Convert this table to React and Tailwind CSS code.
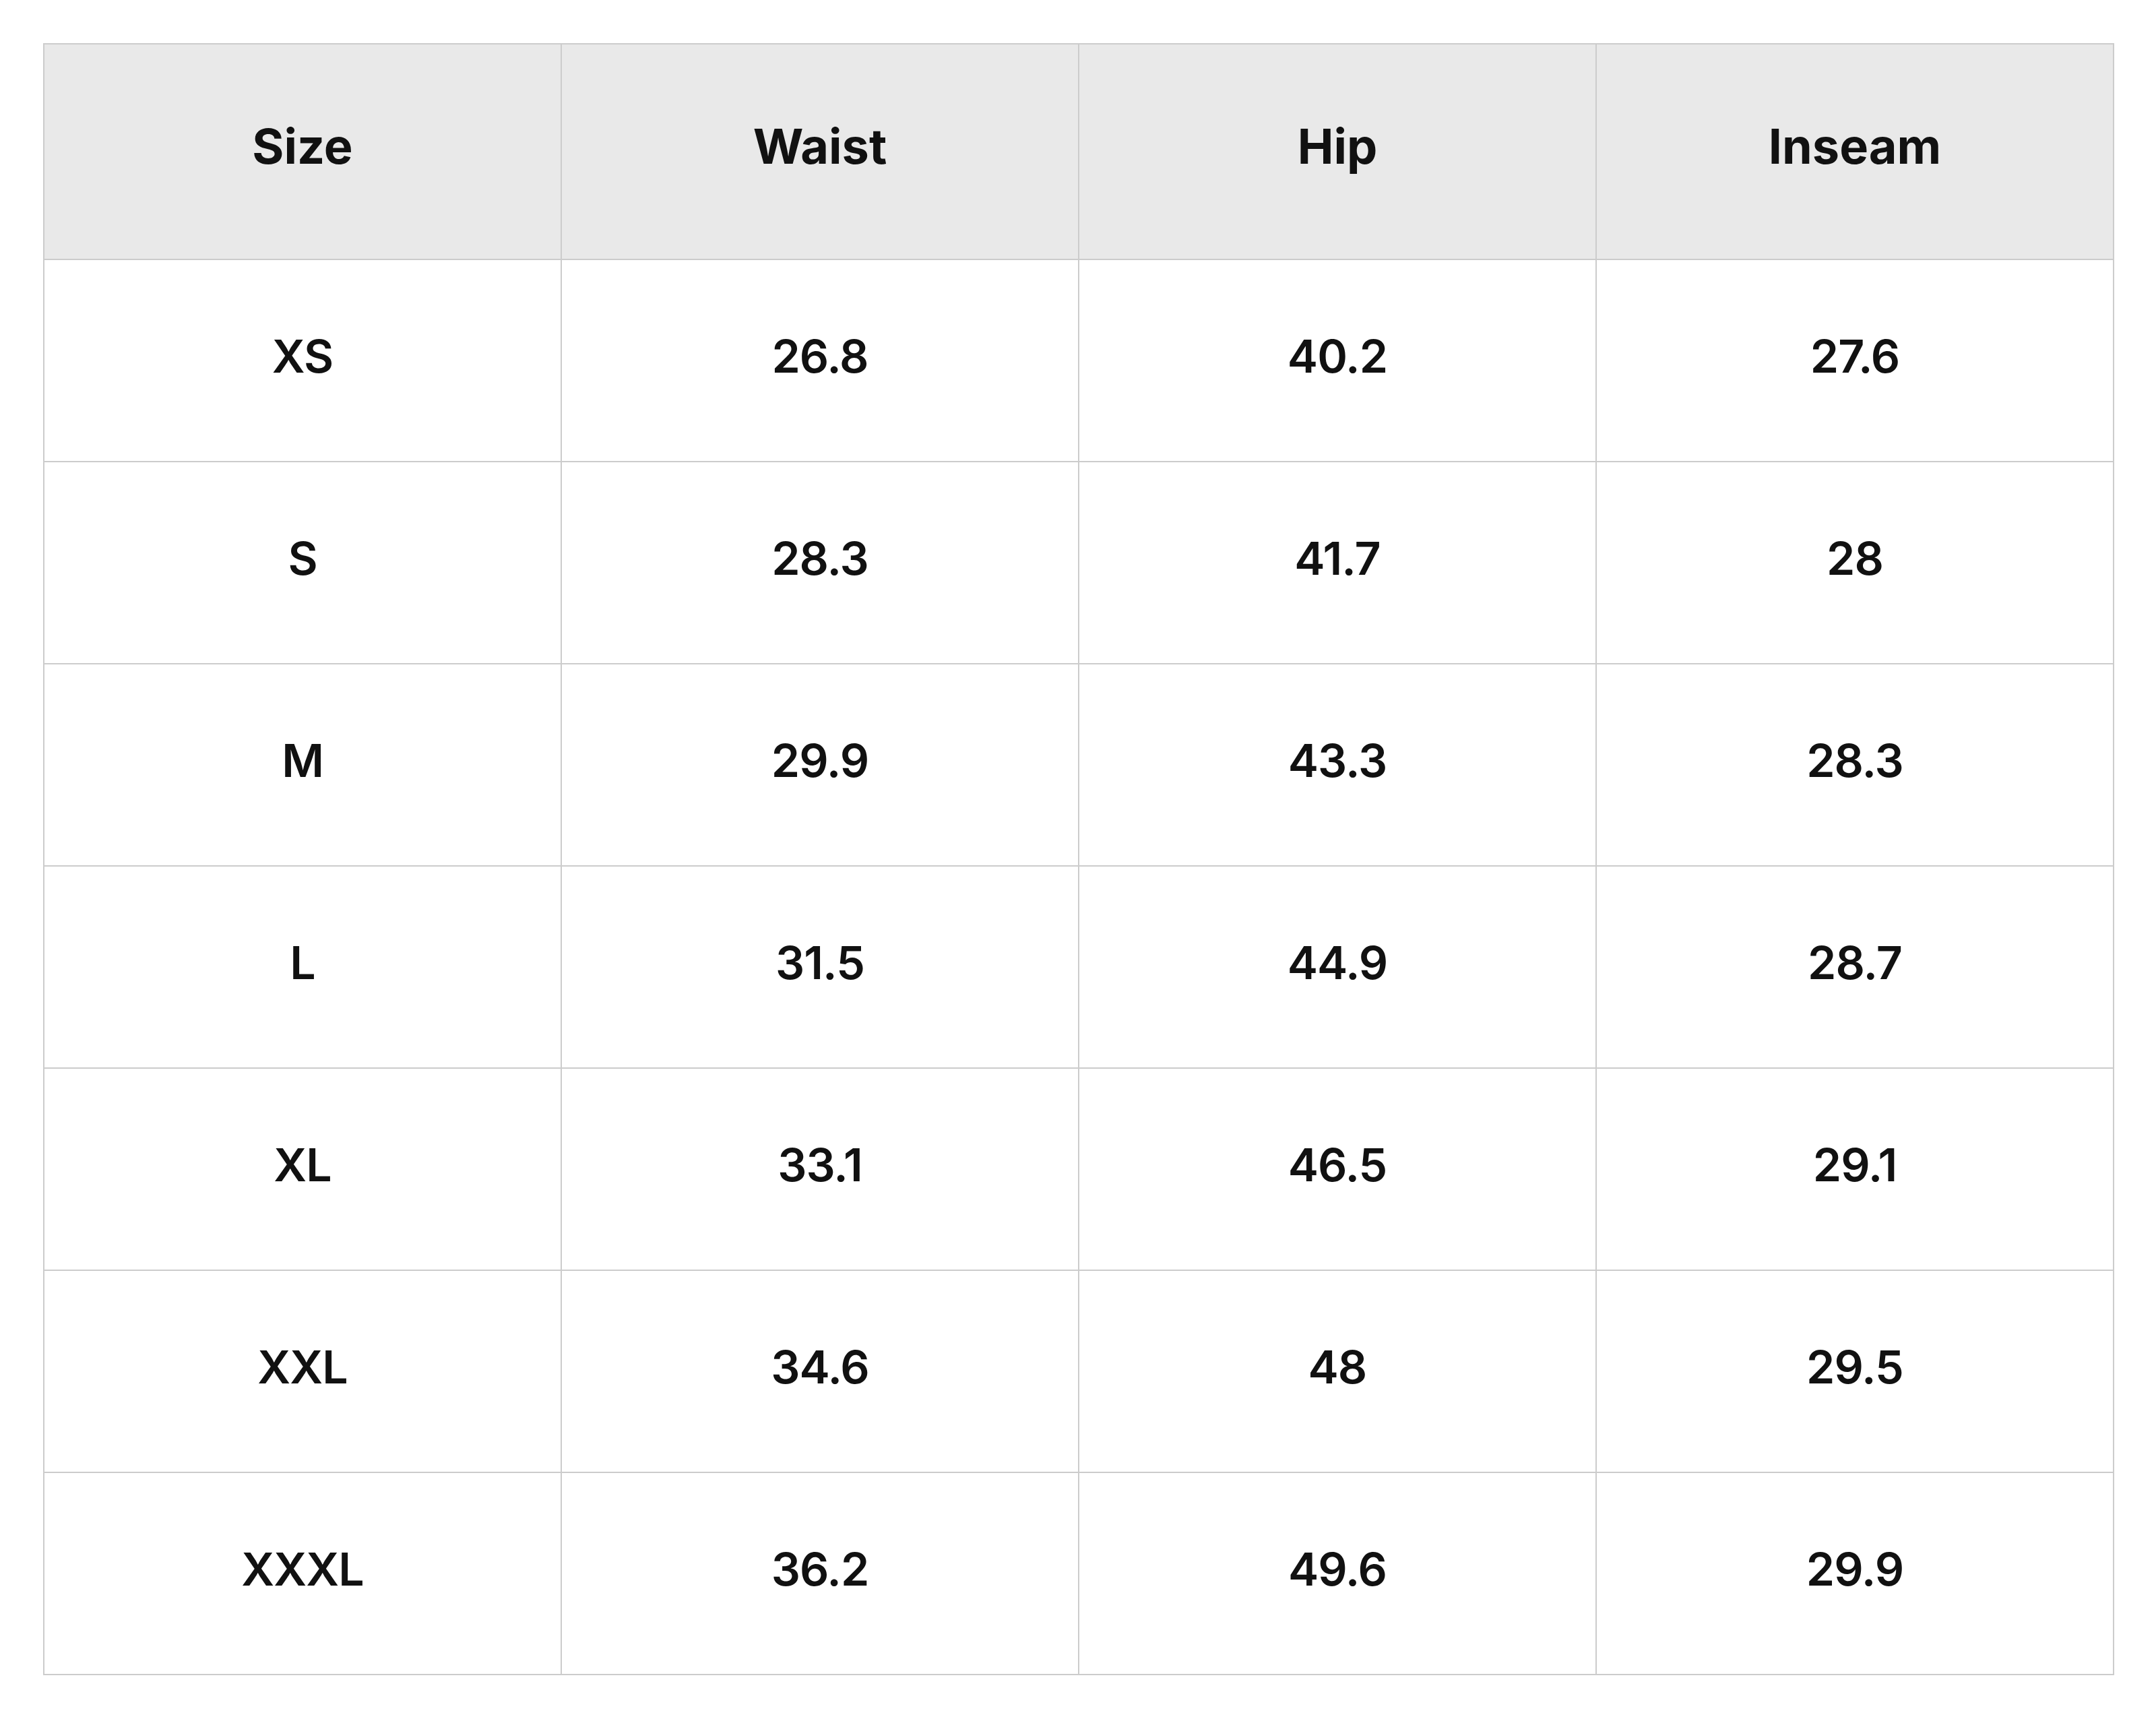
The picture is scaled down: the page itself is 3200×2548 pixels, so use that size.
import React from "react";

const headers = ["Size", "Waist", "Hip", "Inseam"];

const rows = [
  ["XS", "26.8", "40.2", "27.6"],
  ["S", "28.3", "41.7", "28"],
  ["M", "29.9", "43.3", "28.3"],
  ["L", "31.5", "44.9", "28.7"],
  ["XL", "33.1", "46.5", "29.1"],
  ["XXL", "34.6", "48", "29.5"],
  ["XXXL", "36.2", "49.6", "29.9"],
];

const App = () => {
  return (
    <div className="bg-white w-[3200px] h-[2548px] p-[64px] font-['Inter',sans-serif] text-[#111111]">
      <table className="w-[3074px] table-fixed border-collapse border-2 border-[#cccccc]">
        <thead>
          <tr className="bg-[#e9e9e9] h-[320px]">
            {headers.map((h, index) => (
              <th key={index} className="border-2 border-[#cccccc] text-center text-[72px] font-bold align-middle pb-[16px]">
                {h}
              </th>
            ))}
          </tr>
        </thead>
        <tbody>
          {rows.map((row, index) => (
            <tr key={index} className="h-[300px]">
              {row.map((cell, i) => (
                <td key={i} className="border-2 border-[#cccccc] text-center text-[68px] font-semibold align-middle pb-[14px] tracking-[-1px]">
                  {cell}
                </td>
              ))}
            </tr>
          ))}
        </tbody>
      </table>
    </div>
  );
};

export default App;
